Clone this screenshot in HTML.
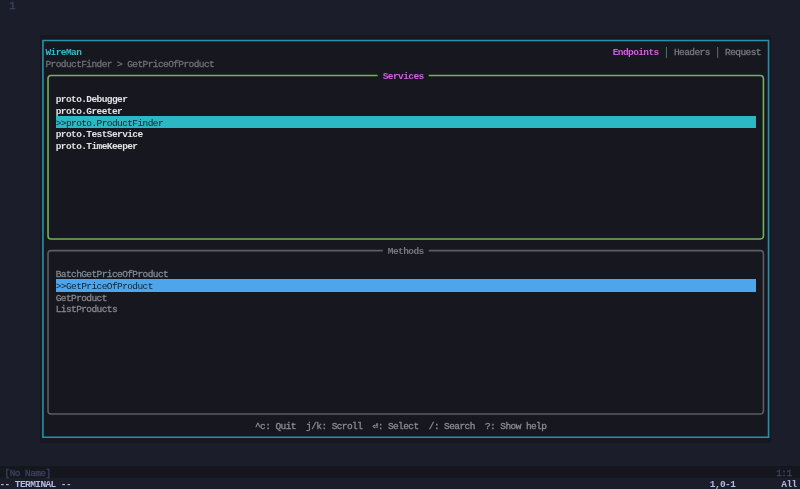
<!DOCTYPE html>
<html><head><meta charset="utf-8"><style>
html,body{margin:0;padding:0;width:800px;height:489px;overflow:hidden;background:#1b1d2a;}
.r{position:absolute;}
#txt{position:absolute;left:0;top:0;width:800px;height:489px;will-change:transform;}
.t{position:absolute;font-family:"Liberation Mono",monospace;font-size:9.5px;letter-spacing:-0.590px;line-height:11.67px;white-space:pre;}
svg{position:absolute;left:0;top:0;}
</style></head><body>
<div class="r" style="left:40.37px;top:34.71px;width:730.73px;height:408.45px;background:#17171f;"></div>
<div class="r" style="left:0.00px;top:466.20px;width:800.00px;height:12.00px;background:#16171e;"></div>
<div class="r" style="left:55.70px;top:116.40px;width:700.07px;height:11.67px;background:#2db7c4;"></div>
<div class="r" style="left:55.70px;top:279.20px;width:700.07px;height:12.40px;background:#4da6ec;"></div>
<svg width="800" height="489" viewBox="0 0 800 489"><path d="M42.93,40.55 L42.93,437.32 L768.55,437.32 L768.55,40.55 Z" stroke="#2393a8" stroke-width="1.6" fill="none"/><path d="M377.63,75.56 L51.04,75.56 Q48.04,75.56 48.04,78.56 L48.04,235.93 Q48.04,238.93 51.04,238.93 L760.44,238.93 Q763.44,238.93 763.44,235.93 L763.44,78.56 Q763.44,75.56 760.44,75.56 L428.73,75.56" stroke="#6fb35c" stroke-width="1.6" fill="none"/><path d="M382.74,250.60 L51.04,250.60 Q48.04,250.60 48.04,253.60 L48.04,410.99 Q48.04,413.99 51.04,413.99 L760.44,413.99 Q763.44,413.99 763.44,410.99 L763.44,253.60 Q763.44,250.60 760.44,250.60 L428.73,250.60" stroke="#5a5d66" stroke-width="1.6" fill="none"/></svg>
<div id="txt">
<div class="t" style="left:9.71px;top:0.80px;color:#3d4366;-webkit-text-stroke:0.3px #3d4366;font-size:10.5px;margin-top:0px;margin-left:-0.5px;">1</div>
<div class="t" style="left:382.74px;top:70.82px;color:#d160e0;font-weight:bold;">Services</div>
<div class="t" style="left:387.85px;top:245.87px;color:#76787f;font-weight:bold;">Methods</div>
<div class="t" style="left:45.48px;top:47.48px;color:#2ebfcb;font-weight:bold;">WireMan</div>
<div class="t" style="left:612.69px;top:47.48px;color:#d160e0;font-weight:bold;">Endpoints</div>
<div class="t" style="left:658.68px;top:47.48px;color:#6a6c74;-webkit-text-stroke:0.3px #6a6c74;"> │ </div>
<div class="t" style="left:674.01px;top:47.48px;color:#77797f;-webkit-text-stroke:0.3px #77797f;">Headers</div>
<div class="t" style="left:709.78px;top:47.48px;color:#6a6c74;-webkit-text-stroke:0.3px #6a6c74;"> │ </div>
<div class="t" style="left:725.11px;top:47.48px;color:#77797f;-webkit-text-stroke:0.3px #77797f;">Request</div>
<div class="t" style="left:45.48px;top:59.15px;color:#6e7078;-webkit-text-stroke:0.3px #6e7078;">ProductFinder &gt; GetPriceOfProduct</div>
<div class="t" style="left:55.70px;top:94.16px;color:#e4e4e6;font-weight:bold;">proto.Debugger</div>
<div class="t" style="left:55.70px;top:105.83px;color:#e4e4e6;font-weight:bold;">proto.Greeter</div>
<div class="t" style="left:55.70px;top:117.50px;color:#17222a;">&gt;&gt;proto.ProductFinder</div>
<div class="t" style="left:55.70px;top:129.17px;color:#e4e4e6;font-weight:bold;">proto.TestService</div>
<div class="t" style="left:55.70px;top:140.84px;color:#e4e4e6;font-weight:bold;">proto.TimeKeeper</div>
<div class="t" style="left:55.70px;top:269.21px;color:#85878d;-webkit-text-stroke:0.3px #85878d;">BatchGetPriceOfProduct</div>
<div class="t" style="left:55.70px;top:280.88px;color:#17222a;">&gt;&gt;GetPriceOfProduct</div>
<div class="t" style="left:55.70px;top:292.55px;color:#85878d;-webkit-text-stroke:0.3px #85878d;">GetProduct</div>
<div class="t" style="left:55.70px;top:304.22px;color:#85878d;-webkit-text-stroke:0.3px #85878d;">ListProducts</div>
<div class="t" style="left:254.99px;top:420.92px;color:#8a8c92;-webkit-text-stroke:0.3px #8a8c92;">^c: Quit  j/k: Scroll  ⏎: Select  /: Search  ?: Show help</div>
<div class="t" style="left:4.60px;top:467.60px;color:#3b4261;-webkit-text-stroke:0.3px #3b4261;">[No Name]</div>
<div class="t" style="left:776.21px;top:467.60px;color:#3b4261;-webkit-text-stroke:0.3px #3b4261;">1:1</div>
<div class="t" style="left:-0.51px;top:479.27px;color:#b4bbdf;font-weight:bold;">-- TERMINAL --</div>
<div class="t" style="left:709.78px;top:479.27px;color:#b4bbdf;font-weight:bold;">1,0-1</div>
<div class="t" style="left:781.32px;top:479.27px;color:#b4bbdf;font-weight:bold;">All</div>
</div>
</body></html>
